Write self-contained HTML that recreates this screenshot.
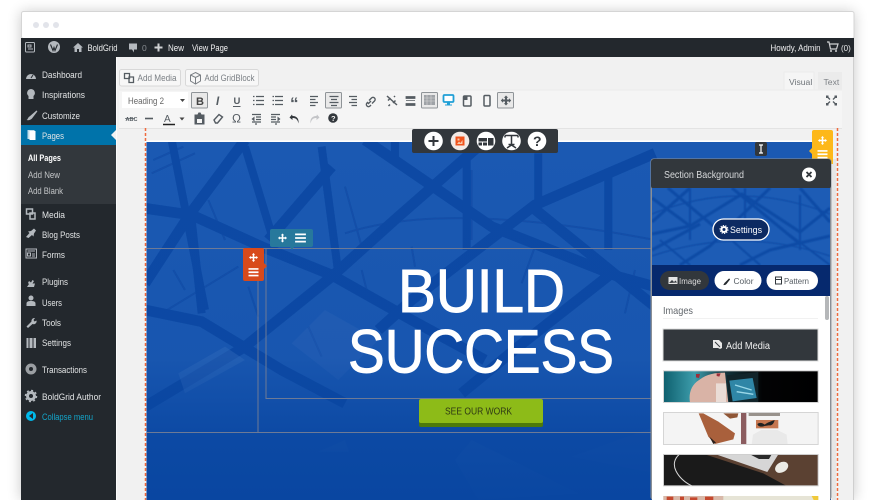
<!DOCTYPE html>
<html><head><meta charset="utf-8"><title>BoldGrid</title>
<style>
html,body{margin:0;padding:0;background:#fff;width:877px;height:500px;overflow:hidden}
svg{display:block;position:absolute;left:0;top:0;filter:blur(.3px)}
text{font-family:"Liberation Sans",sans-serif}
.m{font-size:9.600px;fill:#e2e4e5}
.s{font-size:9px;fill:#c3c5c7}
.a{font-size:9px;fill:#f0f0f1}
.g{fill:#555c62}
.ln{stroke:#555c62;stroke-width:1.300;fill:none}
.i{fill:#b4b9be}
</style></head><body>
<svg width="877" height="500" viewBox="0 0 877 500" xmlns="http://www.w3.org/2000/svg">
<defs>
<filter id="sh" x="-5%" y="-10%" width="110%" height="120%"><feGaussianBlur stdDeviation="7"/></filter>
<filter id="bl" x="-5%" y="-5%" width="110%" height="110%"><feGaussianBlur stdDeviation="1.100"/></filter>
<filter id="bs" x="-5%" y="-5%" width="110%" height="110%"><feGaussianBlur stdDeviation=".5"/></filter>
<clipPath id="hc"><rect x="146.500" y="142" width="684.500" height="358"/></clipPath>
<clipPath id="pc"><rect x="652" y="188" width="178" height="108"/></clipPath>
<clipPath id="t1"><rect x="70" y="62" width="465" height="96"/></clipPath>
<clipPath id="t2"><rect x="70" y="187" width="465" height="97"/></clipPath>
<clipPath id="t3"><rect x="70" y="313" width="465" height="95"/></clipPath>
<linearGradient id="dk" x1="0" y1="0" x2="0" y2="1"><stop offset="0" stop-color="#0845a0" stop-opacity="0"/><stop offset=".6" stop-color="#0845a0" stop-opacity=".15"/><stop offset=".82" stop-color="#0845a0" stop-opacity=".78"/><stop offset="1" stop-color="#0845a0" stop-opacity=".95"/></linearGradient>
<linearGradient id="tl" x1="0" y1="0" x2="1" y2="0"><stop offset="0" stop-color="#0e5f6e"/><stop offset=".2" stop-color="#3d9dac"/><stop offset=".4" stop-color="#12333c"/><stop offset=".64" stop-color="#020304"/><stop offset="1" stop-color="#000"/></linearGradient>
<symbol id="mv" viewBox="0 0 12 12"><path d="M6 0l2.200 2.400H7V5h2.600V3.800L12 6 9.600 8.200V7H7v2.600h1.200L6 12 3.800 9.600H5V7H2.400v1.200L0 6l2.400-2.200V5H5V2.400H3.800z" fill="#fff"/></symbol>
<symbol id="hb" viewBox="0 0 12 10"><path d="M0 0h12v2H0zM0 4h12v2H0zM0 8h12v2H0z" fill="#fff"/></symbol>
</defs>

<!-- outer shadow -->
<rect x="21" y="12" width="833" height="488" fill="#000" opacity=".22" filter="url(#sh)"/>
<!-- frame -->
<rect x="21" y="12" width="833" height="488" fill="#f1f1f1"/>
<rect x="21.500" y="11.500" width="832.500" height="27" rx="2" fill="#fff" stroke="#d5d5d5"/>
<circle cx="36" cy="25" r="3" fill="#e2e4ea"/><circle cx="46" cy="25" r="3" fill="#e2e4ea"/><circle cx="56" cy="25" r="3" fill="#e2e4ea"/>
<path d="M853.500 38V500" stroke="#cfcfcf"/>

<!-- admin bar -->
<rect x="21" y="38" width="833" height="19" fill="#23282d"/>
<rect x="25.500" y="42.500" width="9" height="9.500" rx="1" fill="none" stroke="#b4b9be"/><path d="M28 45h3v2h-3zM28 49h5" stroke="#b4b9be" fill="none"/>
<circle cx="54" cy="47" r="6" fill="#b4b9be"/><path d="M50.500 44.500l2.500 6 1-3 1 3 2.500-6" stroke="#23282d" fill="none" stroke-width="1.100"/>
<path d="M73 47.500l5-4.500 5 4.500h-1.500V52h-2.500v-3h-2v3h-2.500v-4.500z" class="i"/>
<text x="87.500" y="51" font-size="9.500" fill="#eceded" textLength="30" lengthAdjust="spacingAndGlyphs">BoldGrid</text>
<path d="M129 43.500h8v6h-3v3l-2-3h-3z" class="i"/><text x="142" y="51" font-size="8.500" fill="#888d92">0</text>
<path d="M158.500 43.500v8M154.500 47.500h8" stroke="#cfd1d3" stroke-width="2"/>
<text x="168" y="51" class="a" textLength="16" lengthAdjust="spacingAndGlyphs">New</text>
<text x="192" y="51" class="a" textLength="36" lengthAdjust="spacingAndGlyphs">View Page</text>
<text x="770.500" y="51" class="a" textLength="50" lengthAdjust="spacingAndGlyphs">Howdy, Admin</text>
<path d="M827 42h2l1.500 7h6l1.500-5h-8" fill="none" stroke="#cfd1d3" stroke-width="1.200"/><circle cx="831" cy="51" r="1" fill="#cfd1d3"/><circle cx="836" cy="51" r="1" fill="#cfd1d3"/>
<text x="841" y="51" font-size="8" fill="#e6e7e8">(0)</text>

<!-- sidebar -->
<rect x="21" y="57" width="95" height="443" fill="#23282d"/>
<rect x="21" y="125" width="95" height="20" fill="#0073aa"/>
<rect x="21" y="145" width="95" height="59" fill="#32373c"/>
<path d="M116 130v10l-5-5z" fill="#f1f1f1"/>

<text x="42" y="78" class="m" textLength="40" lengthAdjust="spacingAndGlyphs">Dashboard</text>
<text x="42" y="98" class="m" textLength="43" lengthAdjust="spacingAndGlyphs">Inspirations</text>
<text x="42" y="119" class="m" textLength="38" lengthAdjust="spacingAndGlyphs">Customize</text>
<text x="42" y="139" class="m" textLength="22" lengthAdjust="spacingAndGlyphs">Pages</text>
<text x="28" y="161" font-size="9" fill="#fff" font-weight="bold" textLength="33" lengthAdjust="spacingAndGlyphs">All Pages</text>
<text x="28" y="178" class="s" textLength="32" lengthAdjust="spacingAndGlyphs">Add New</text>
<text x="28" y="194" class="s" textLength="35" lengthAdjust="spacingAndGlyphs">Add Blank</text>
<text x="42" y="218" class="m" textLength="23" lengthAdjust="spacingAndGlyphs">Media</text>
<text x="42" y="238" class="m" textLength="38" lengthAdjust="spacingAndGlyphs">Blog Posts</text>
<text x="42" y="258" class="m" textLength="23" lengthAdjust="spacingAndGlyphs">Forms</text>
<text x="42" y="285" class="m" textLength="26" lengthAdjust="spacingAndGlyphs">Plugins</text>
<text x="42" y="306" class="m" textLength="20" lengthAdjust="spacingAndGlyphs">Users</text>
<text x="42" y="326" class="m" textLength="19" lengthAdjust="spacingAndGlyphs">Tools</text>
<text x="42" y="346" class="m" textLength="29" lengthAdjust="spacingAndGlyphs">Settings</text>
<text x="42" y="373" class="m" textLength="45" lengthAdjust="spacingAndGlyphs">Transactions</text>
<text x="42" y="400" class="m" textLength="59" lengthAdjust="spacingAndGlyphs">BoldGrid Author</text>
<text x="42" y="420" font-size="9" fill="#13a5c9" textLength="51" lengthAdjust="spacingAndGlyphs">Collapse menu</text>

<!-- sidebar icons -->
<path d="M26 79a5 5 0 1 1 10 0z" class="i"/><path d="M31 78l2-3" stroke="#23282d"/>
<path d="M31 90a4 4 0 0 1 2.500 7v3h-5v-3a4 4 0 0 1 2.500-7z" class="i" transform="translate(0 -1)"/>
<path d="M26.500 120c1.500-.5 1.500-3 3-3.500l7-6c.6.3.8.6.8 1l-5.300 7c-1.500 1.500-3.500 2-5.500 1.500z" class="i"/>
<rect x="27.500" y="130" width="7" height="9" fill="#fff" opacity=".75"/><rect x="29.500" y="131" width="6" height="9" fill="#fff"/>
<path d="M26.500 209h6v5h-6zM30 213h5v6h-5z" fill="none" stroke="#b4b9be" stroke-width="1.500"/>
<path d="M27 237l3.500-4-1.500-1.500 3-.5 3-2.500 2 2-2 3-.5 3-1.500-1.500-3.500 3z" class="i" transform="translate(-1 0)"/>
<rect x="26" y="249" width="10.500" height="9" fill="none" stroke="#b4b9be"/><path d="M27.500 251h7.500M27.500 253h3v3h-3zM32 254h3M32 256h3" stroke="#b4b9be" fill="none"/>
<path d="M27 287l2-3-1-1 1-2 2 1.500 1.500-2.500 1.500 1-1.500 2.500 2.500 0-1 3.500h-3z" class="i"/>
<circle cx="31" cy="298" r="2.500" class="i"/><path d="M26.500 306v-2.500c0-2 2-2.500 4.500-2.500s4.500.5 4.500 2.500v2.500z" class="i"/>
<path d="M27 327l5-5a3 3 0 0 1 3.500-3.500l-1.500 2 1 1.500 2-1a3 3 0 0 1-4 3.500l-4.500 4z" class="i" transform="translate(-.5 -.5)"/>
<rect x="26.500" y="338" width="9.500" height="10" class="i"/><path d="M29 338v10M33 338v10" stroke="#23282d"/>
<circle cx="31" cy="369" r="5.500" fill="#9b9fa3"/><circle cx="31" cy="369" r="2" fill="#23282d"/>
<circle cx="31" cy="396" r="3.500" fill="none" stroke="#b4b9be" stroke-width="3"/><circle cx="31" cy="396" r="5.500" fill="none" stroke="#b4b9be" stroke-width="1.500" stroke-dasharray="2 2.300"/>
<circle cx="31" cy="416" r="5" fill="#00b9eb"/><path d="M33 413v6l-4-3z" fill="#23282d"/>

<!-- content -->
<rect x="116" y="57" width="737" height="443" fill="#f1f1f1"/>
<rect x="116" y="57" width="1" height="443" fill="#fbfbfb"/>
<!-- media buttons -->
<rect x="119.500" y="69.500" width="61" height="16.500" rx="2" fill="#f7f7f7" stroke="#d8d8d8"/>
<rect x="185.500" y="69.500" width="73" height="16.500" rx="2" fill="#f7f7f7" stroke="#d8d8d8"/>
<path d="M124.500 73.500h5v5h-5zM129 77h4.500v5.500H129z" fill="none" stroke="#555c62" stroke-width="1.300"/>
<text x="137.500" y="81" font-size="9.300" fill="#7a7f84" textLength="39" lengthAdjust="spacingAndGlyphs">Add Media</text>
<path d="M195.500 72.500l5 2.500v6l-5 3-5-3v-6zM190.500 75l5 2.500 5-2.500M195.500 77.500v6" fill="none" stroke="#7a7f84"/>
<text x="204.500" y="81" font-size="9.300" fill="#7a7f84" textLength="50" lengthAdjust="spacingAndGlyphs">Add GridBlock</text>
<!-- tabs -->
<rect x="784" y="72" width="30" height="19" fill="#f5f5f5" stroke="#ececec"/>
<rect x="818" y="72" width="24" height="18" fill="#ebebeb"/>
<text x="789" y="85" font-size="8.600" fill="#6f7479">Visual</text>
<text x="823.500" y="85" font-size="8.600" fill="#7d8186">Text</text>
<!-- toolbar -->
<rect x="119" y="90" width="723" height="38" fill="#f5f5f5"/>
<path d="M119 90h723" stroke="#ececec"/><path d="M119 128.500h723" stroke="#e3e3e3"/>
<rect x="122" y="92" width="66" height="16" fill="#fff"/>
<text x="128" y="104" font-size="9.300" fill="#666" textLength="36" lengthAdjust="spacingAndGlyphs">Heading 2</text>
<path d="M180 99h5l-2.500 3z" fill="#444"/>
<g fill="#e9e9e9" stroke="#8f9498"><rect x="191.500" y="92.500" width="16" height="15.500" rx="1"/><rect x="325.500" y="92.500" width="16" height="15.500" rx="1"/><rect x="421.500" y="92.500" width="16" height="15.500" rx="1"/><rect x="497.500" y="92.500" width="16" height="15.500" rx="1"/></g>
<text x="196" y="105" font-size="11" font-weight="bold" fill="#444">B</text>
<text x="216" y="105" font-size="11.500" font-style="italic" font-weight="bold" fill="#555c62">I</text>
<text x="233.500" y="104" font-size="9.500" font-weight="bold" fill="#555c62">U</text><path d="M233 106.500h7.500" stroke="#555c62"/>
<g class="ln"><path d="M256 96.500h8M256 100.500h8M256 104.500h8M253 96.500h1.500M253 100.500h1.500M253 104.500h1.500"/>
<path d="M275 96.500h8M275 100.500h8M275 104.500h8M272.500 96.500h1.500M272.500 100.500h1.500M272.500 104.500h1.500"/>
<path d="M310 96.500h8M310 99.500h5.500M310 102.500h8M310 105.500h5.500"/>
<path d="M329.500 96.500h9M331 99.500h6M329.500 102.500h9M331 105.500h6"/>
<path d="M349 96.500h8M351.500 99.500h5.500M349 102.500h8M351.500 105.500h5.500"/></g>
<text x="290" y="109" font-size="17" font-weight="bold" fill="#555c62">“</text>
<path d="M368 104l3-3M369 100.500l2.500-2.500a2 2 0 0 1 3 3l-2.500 2.500M371 105l-1 1a2 2 0 0 1-3-3l1-1" stroke="#555c62" stroke-width="1.400" fill="none"/>
<path d="M387 96l10 9M388 100.500l2.500-2.500M393 103l2.500-2.500M390 104.500l-1.500 1.500M394 97l1-1" stroke="#555c62" stroke-width="1.500" fill="none"/>
<path d="M406 96.500h9v2h-9zM406 103.500h9v2h-9zM406 100.500h9" fill="#555c62" stroke="#555c62" stroke-width=".8"/>
<rect x="424" y="95" width="11" height="10" fill="#9fa3a7"/><path d="M424 98h11M424 101h11M427 95v10M431 95v10" stroke="#d8d8d8" stroke-width=".6"/>
<rect x="443.500" y="95" width="10" height="7" rx="1" fill="#fff" stroke="#1f9fd6" stroke-width="1.800"/><path d="M447 102.500h3v2h2v1h-7v-1h2z" fill="#1f9fd6"/>
<rect x="463.500" y="96" width="7.500" height="10" rx="1" fill="#f5f5f5" stroke="#555c62" stroke-width="1.500"/><path d="M463.500 96h4v4h-4z" fill="#555c62"/>
<rect x="484" y="95.500" width="6" height="10.500" rx="1" fill="#f5f5f5" stroke="#555c62" stroke-width="1.500"/>
<path d="M506 95.500l2.200 2.200H507V99.500h2V98.300l2.200 2.200-2.200 2.200v-1.200h-2v1.800h1.200L506 105.500l-2.200-2.200H505V101.500h-2v1.200l-2.200-2.200 2.200-2.200V99.500h2V97.700h-1.200z" fill="#555c62"/>
<path d="M827 96.500l3 3M836 96.500l-3 3M827 104.500l3-3M836 104.500l-3-3" stroke="#555c62" stroke-width="1.300"/><g fill="#555c62"><rect x="826" y="95.500" width="2.500" height="2.500"/><rect x="834.500" y="95.500" width="2.500" height="2.500"/><rect x="826" y="103" width="2.500" height="2.500"/><rect x="834.500" y="103" width="2.500" height="2.500"/></g>
<!-- row 2 -->
<text x="125.500" y="121" font-size="5.500" font-weight="bold" fill="#555c62">ABC</text><path d="M125 118.500h10" stroke="#555c62" stroke-width=".7"/>
<path d="M145 118.500h8" stroke="#555c62" stroke-width="1.600"/>
<text x="164" y="122" font-size="10" fill="#555c62">A</text><path d="M163 124.500h12" stroke="#222" stroke-width="1.500"/>
<path d="M179.500 117.500h5l-2.500 3z" fill="#444"/>
<path d="M194.500 114.500h3l1-2h2l1 2h3v10h-10z" class="g"/><rect x="197" y="119" width="5" height="4" fill="#f5f5f5"/>
<path d="M214 120l5-5.500 3.500 2.500-5 6h-2z" fill="none" stroke="#555c62" stroke-width="1.400"/>
<text x="232" y="122.500" font-size="12" fill="#555c62">Ω</text>
<path d="M252 114.500h9M256 117h5M256 119.500h5M252 122h9M255 124h2" class="ln" stroke-width="1.200"/><path d="M254.500 116.500l-3 2.500 3 2.500z" class="g"/>
<path d="M271 114.500h9M271 117h5M271 119.500h5M271 122h9M275 124h2" class="ln" stroke-width="1.200"/><path d="M277.500 116.500l3 2.500-3 2.500z" class="g"/>
<path d="M292 114.500l-2.500 3 3 2.500v-2c3 0 5 1 6 5.500 .5-4-1-7.500-6-7.500z" fill="#32373c"/>
<path d="M317 114.500l2.500 3-3 2.500v-2c-3 0-5 1-6 5.500-.5-4 1-7.500 6-7.500z" fill="#c3c4c7"/>
<circle cx="333" cy="118" r="4.800" fill="#32373c"/><text x="331" y="121" font-size="7.500" font-weight="bold" fill="#f5f5f5">?</text>

<!-- hero -->
<rect x="145" y="140.500" width="687" height="1.500" fill="#fff"/>
<g clip-path="url(#hc)">
<rect x="146.500" y="142" width="684.500" height="358" fill="#1b59b2"/>
<g transform="translate(145 140) scale(.3333)" fill="none" stroke="#0c49a4" stroke-linejoin="round" filter="url(#bl)">
<g stroke-width="32">
<path d="M0 205L140 225L350 320L560 405L800 540L1020 660"/>
<path d="M0 510L170 545L410 690L600 790"/>
<path d="M0 800L300 620L560 410L760 230L1000 20"/>
<path d="M660 0L1040 260L1420 410L1530 440"/>
<path d="M1530 40L1390 100L1170 195L800 480L700 570"/>
<path d="M1160 200L1530 500"/>
<path d="M300 0L140 215L0 430"/>
<path d="M560 80L370 300"/>
<path d="M1400 400L1120 620L950 760"/>
</g>
<g stroke-width="24">
<path d="M80 0L180 510"/><path d="M530 20L580 400"/><path d="M300 20L385 300"/>
<path d="M965 40V330"/><path d="M1180 40V190"/><path d="M1390 90V330"/><path d="M140 240L170 520"/>
<path d="M750 0V60"/>
</g>
<g stroke-width="6" opacity=".6">
<path d="M20 100L150 40M25 60L115 20M600 280Q900 180 1530 300M50 520L280 380M490 560L530 650M1170 320L1130 430M800 320L810 380M600 140L650 320M190 180L240 300"/>
<path d="M85 390L120 450M650 390L665 450M1470 390L1440 520M980 90L980 300M310 440L340 530"/>
</g>
</g>
<g transform="translate(145 140) scale(.3333)" fill="#3a72c0" opacity=".4" filter="url(#bl)">
<path d="M100 700L240 620 300 660 120 760zM520 935L600 900 612 935zM930 960L980 900 1300 1060 1000 1080z"/>
<path d="M1280 950L1530 860V1000zM440 610L540 510 700 600 580 720z" opacity=".6"/>
</g>
<rect x="146.500" y="142" width="684.500" height="358" fill="url(#dk)"/>
</g>
<!-- dashed -->
<path d="M145.500 128V500M837.500 128V500" stroke="#ef6a3d" stroke-width="1.500" stroke-dasharray="3 2"/>
<rect x="832" y="159" width="4" height="341" fill="#e6e6e6"/>

<!-- grid lines -->
<g stroke="#6d7a96" fill="none" stroke-width="1">
<path d="M147 248.500H651M147 432.500H651M258 248V432M266 248.500V398.500H651"/>
</g>

<!-- hero text -->
<text x="398" y="312" font-size="61" fill="#fff" stroke="#fff" stroke-width=".9" textLength="167" lengthAdjust="spacingAndGlyphs">BUILD</text>
<text x="348" y="372.500" font-size="61" fill="#fff" stroke="#fff" stroke-width=".9" textLength="266" lengthAdjust="spacingAndGlyphs">SUCCESS</text>
<!-- button -->
<rect x="419" y="402" width="124" height="25" rx="2" fill="#4d7a0c"/>
<rect x="419" y="399" width="124" height="24" rx="2" fill="#8dbb18"/>
<text x="445" y="414.500" font-size="10.500" fill="#2f3a14" textLength="67" lengthAdjust="spacingAndGlyphs">SEE OUR WORK</text>

<!-- teal handle -->
<path d="M272 229h39a2 2 0 0 1 2 2v14a2 2 0 0 1-2 2h-17l-2 3-2-3h-18a2 2 0 0 1-2-2v-14a2 2 0 0 1 2-2z" fill="#27789c"/>
<use href="#mv" x="278" y="233.500" width="9" height="9"/><use href="#hb" x="295" y="233.500" width="11" height="9"/>
<!-- orange handle -->
<path d="M245 248h17a2 2 0 0 1 2 2v13l3 3-3 3v10a2 2 0 0 1-2 2h-17a2 2 0 0 1-2-2v-29a2 2 0 0 1 2-2z" fill="#d84a1b"/>
<use href="#mv" x="249" y="253" width="9" height="9"/><use href="#hb" x="248.500" y="268" width="10" height="8.500"/>
<!-- yellow handle -->
<path d="M814 130h17a2 2 0 0 1 2 2v32h-21v-10l-3-3 3-3v-16a2 2 0 0 1 2-2z" fill="#fdb81a"/>
<use href="#mv" x="818" y="136" width="9" height="9"/><use href="#hb" x="817.500" y="150" width="10" height="8.500"/>
<!-- drag handle -->
<rect x="755" y="142" width="12" height="14" rx="2" fill="#32373c"/>
<path d="M761 144.500v9M759 145h4M759 153h4" stroke="#fff" stroke-width="1.200"/>

<!-- float toolbar -->
<rect x="412" y="129" width="146" height="24" rx="2" fill="#32373c"/>
<g fill="#fff"><circle cx="433.500" cy="141" r="9.300"/><circle cx="460" cy="141" r="9.300" fill="#f2e9e5"/><circle cx="486" cy="141" r="9.300"/><circle cx="511.500" cy="141" r="9.300"/><circle cx="537" cy="141" r="9.300"/></g>
<path d="M433.500 136v10M428.500 141h10" stroke="#32373c" stroke-width="2"/>
<rect x="455.500" y="136.500" width="9" height="9" fill="#f0521c"/><path d="M457 144l2-2.500 1.500 1.500 2-3v4zM457.500 138.500h2v2h-2z" fill="#f7c8a8"/>
<path d="M478.500 138h8.500v3.500h-8.500zM488 138h5.500v7.500H488zM478.500 142.500h3.500v3h-3.500zM483 142.500h4v3h-4z" fill="#32373c"/>
<path d="M505 135.500h13M505 135.500v2M518 135.500v2M511.500 135.500v9M508.500 144.500h6M507 148l4.500-3 4.500 3" fill="none" stroke="#32373c" stroke-width="1.500"/>
<text x="533" y="146" font-size="14" font-weight="bold" fill="#32373c">?</text>

<!-- panel -->
<rect x="650.500" y="158.500" width="181" height="341.500" rx="3" fill="#8a8f96"/>
<rect x="651" y="159" width="180" height="30" rx="3" fill="#32373c"/>
<text x="664" y="178" font-size="10.200" fill="#d8dadc" textLength="80" lengthAdjust="spacingAndGlyphs">Section Background</text>
<circle cx="809" cy="174.500" r="7" fill="#fff"/><path d="M806.500 172l5 5M811.500 172l-5 5" stroke="#32373c" stroke-width="1.800"/>
<g clip-path="url(#pc)">
<rect x="652" y="188" width="178" height="108" fill="#1d5cb5"/>
<g fill="none" stroke="#0e4ba6" stroke-width="3" filter="url(#bs)">
<path d="M652 198L690 226 742 194 800 232 830 208"/>
<path d="M652 234L690 226M668 188L730 240M732 188L800 244M800 188L830 222M690 188L652 222"/>
<path d="M770 188L710 246 680 265M830 236L770 250 740 265M652 250L700 224"/>
<path d="M690 188V240M745 188V222M800 195V250M720 230L760 265M790 235L830 265M660 240L690 265" stroke-width="2"/>
<path d="M652 214Q740 178 830 214M652 256Q740 226 830 256" stroke-width="1.200"/>
</g>
<rect x="652" y="265" width="178" height="31" fill="#06296e"/>
</g>
<rect x="713" y="219" width="56" height="21" rx="10.500" fill="#0c2a62" stroke="#fff" stroke-width="1.300"/>
<circle cx="724" cy="229.500" r="2.500" fill="none" stroke="#fff" stroke-width="2"/><circle cx="724" cy="229.500" r="4" fill="none" stroke="#fff" stroke-width="1" stroke-dasharray="1.300 1.200"/>
<text x="730" y="233" font-size="9.500" fill="#fff" textLength="32" lengthAdjust="spacingAndGlyphs">Settings</text>

<rect x="660" y="271" width="49" height="19" rx="9.500" fill="#32373c"/>
<rect x="714.500" y="271" width="47" height="19" rx="9.500" fill="#fff"/>
<rect x="766.500" y="271" width="51.500" height="19" rx="9.500" fill="#fff"/>
<rect x="668.500" y="277" width="9" height="7" fill="#e4e4e4"/><path d="M669 283l3-3 2 2 1.500-1.500 1.500 2z" fill="#32373c"/>
<text x="679" y="284" font-size="8.600" fill="#dcdcdc" textLength="22" lengthAdjust="spacingAndGlyphs">Image</text>
<path d="M723 285c1-.2 1-2 2-2.500l4-4c.5.200 1 .5 1 1l-3.500 4.500c-1 1-2.200 1.200-3.500 1z" fill="#23282d"/>
<text x="733.500" y="284" font-size="8.600" fill="#555c62" textLength="20" lengthAdjust="spacingAndGlyphs">Color</text>
<rect x="775.500" y="277" width="6" height="7" fill="none" stroke="#32373c"/><path d="M775.500 279.500h6" stroke="#32373c"/>
<text x="784" y="284" font-size="8.600" fill="#555c62" textLength="25" lengthAdjust="spacingAndGlyphs">Pattern</text>

<rect x="652" y="296" width="178" height="204" fill="#fff"/>
<rect x="825" y="296" width="4" height="24" rx="2" fill="#b5b7b9"/>
<text x="663" y="314" font-size="10.200" fill="#62676c" textLength="30" lengthAdjust="spacingAndGlyphs">Images</text>
<path d="M663 318.500h155" stroke="#f1f1f1"/>
<rect x="663" y="329" width="155" height="32" fill="#32373c" stroke="#dcdcdc"/>
<path d="M713 340h6l3 3v5l-2 1-2-1h-5z" fill="#e8e8e8"/><path d="M715 342l5 5" stroke="#32373c"/>
<text x="726" y="349" font-size="10" fill="#f0f0f0" textLength="44" lengthAdjust="spacingAndGlyphs">Add Media</text>

<!-- thumbs -->
<g transform="translate(640 350) scale(.3333)">
<g clip-path="url(#t1)"><rect x="70" y="62" width="465" height="96" fill="url(#tl)"/>
<path d="M150 158c-5-30 5-55 30-70 20-15 45-20 75-20l10 90z" fill="#d9b3a6"/><path d="M230 70h12l-4 10-8-2zM168 72h12l-3 12-9-2z" fill="#9c2f3a"/>
<path d="M260 76l95-10v92H268z" fill="#11242a"/><path d="M268 92l70-8 12 60-72 10z" fill="#2f86a6"/><path d="M285 105l50 15M290 125l50 8" stroke="#9ad8e8" stroke-width="4"/>
<path d="M228 100h30v58h-30z" fill="#eadcd6"/></g>
<rect x="70.500" y="62.500" width="464" height="95" fill="none" stroke="#d5d5d5" stroke-width="3"/>
<g clip-path="url(#t2)"><rect x="70" y="187" width="465" height="97" fill="#f4f4f4"/>
<path d="M176 190h14l45 25 50 35-5 18-55 14-20-22z" fill="#a9603c"/><path d="M208 260l20 18-8 4z" fill="#2a1f1a"/><path d="M250 190h45l-3 12-22 4z" fill="#8f5636"/>
<rect x="303" y="187" width="16" height="97" fill="#8b5c5f"/><rect x="326" y="187" width="94" height="11" fill="#98928c"/>
<rect x="348" y="210" width="67" height="25" fill="#c67750"/><path d="M352 222c8-6 16-3 22 2 10-8 20-10 30-14-2 10-8 18-18 16l-12 2c-10 4-20 2-22-6z" fill="#222"/>
<path d="M335 284l4-30 25-14h48l28 14 3 30z" fill="#e9e9e9"/></g>
<rect x="70.500" y="187.500" width="464" height="96" fill="none" stroke="#d5d5d5" stroke-width="3"/>
<g clip-path="url(#t3)"><rect x="70" y="313" width="465" height="95" fill="#1a1a1a"/>
<path d="M195 313H535v95H440L370 370z" fill="#5b4132"/>
<path d="M228 313H415L382 366z" fill="#d6d6d6"/><path d="M330 313h65l-8 14h-30z" fill="#2a2a2a"/>
<ellipse cx="425" cy="352" rx="21" ry="15" transform="rotate(-30 425 352)" fill="#ecebe6"/>
<path d="M118 313c-14 12-20 30-10 50 10 20 30 36 48 45" fill="none" stroke="#d8d8d8" stroke-width="3"/></g>
<rect x="70.500" y="313.500" width="464" height="94" fill="none" stroke="#cfcfcf" stroke-width="3"/>
<rect x="70" y="438" width="465" height="12" fill="#e6e4d6"/><rect x="70" y="438" width="180" height="12" fill="#d8b8a8"/>
<path d="M80 440h20v10H80zM120 440h12v10h-12zM150 442h22v8h-22zM195 440h25v10h-25z" fill="#c5482e"/><path d="M515 438h20v12h-14z" fill="#f0c93a"/>
</g>
</svg>
</body></html>
